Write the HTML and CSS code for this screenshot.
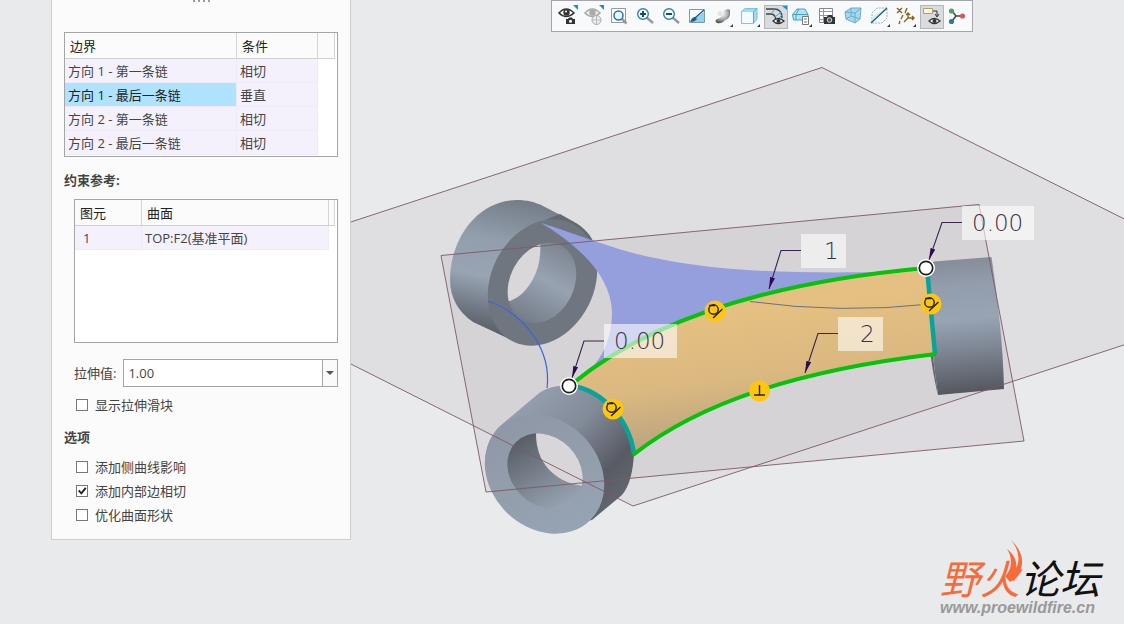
FILE: index.html
```html
<!DOCTYPE html>
<html lang="zh-CN">
<head>
<meta charset="utf-8">
<title>边界混合</title>
<link rel="stylesheet" href="styles.css">
</head>
<body>
<main class="workspace">
  <svg class="scene" viewBox="0 0 1124 624" preserveAspectRatio="xMidYMin slice" role="img" aria-label="三维模型">
    <defs>
      <linearGradient id="skin" gradientUnits="userSpaceOnUse" x1="715" y1="315" x2="735" y2="462"><stop offset="0" stop-color="#e5c082"/><stop offset=".45" stop-color="#dab880"/><stop offset="1" stop-color="#b09c80"/></linearGradient>
      <linearGradient id="tubeA" gradientUnits="userSpaceOnUse" x1="510" y1="200" x2="480" y2="335"><stop offset="0" stop-color="#767e89"/><stop offset=".3" stop-color="#929eac"/><stop offset=".58" stop-color="#98a4b3"/><stop offset=".8" stop-color="#737b87"/><stop offset="1" stop-color="#555a62"/></linearGradient>
      <linearGradient id="boreA" gradientUnits="userSpaceOnUse" x1="570" y1="250" x2="530" y2="325"><stop offset="0" stop-color="#7d8591"/><stop offset=".45" stop-color="#98a3b2"/><stop offset="1" stop-color="#747c88"/></linearGradient>
      <linearGradient id="tubeB" gradientUnits="userSpaceOnUse" x1="530" y1="400" x2="625" y2="490"><stop offset="0" stop-color="#939dac"/><stop offset=".4" stop-color="#838b99"/><stop offset=".8" stop-color="#585b63"/><stop offset="1" stop-color="#62656d"/></linearGradient>
      <linearGradient id="faceB" gradientUnits="userSpaceOnUse" x1="570" y1="420" x2="530" y2="530"><stop offset="0" stop-color="#9098a7"/><stop offset="1" stop-color="#96a3b2"/></linearGradient>
      <linearGradient id="boreB" gradientUnits="userSpaceOnUse" x1="520" y1="442" x2="560" y2="510"><stop offset="0" stop-color="#5b6068"/><stop offset=".4" stop-color="#747c87"/><stop offset="1" stop-color="#98a4b3"/></linearGradient>
      <linearGradient id="tubeC" gradientUnits="userSpaceOnUse" x1="960" y1="258" x2="972" y2="393"><stop offset="0" stop-color="#858c99"/><stop offset=".2" stop-color="#939dac"/><stop offset=".45" stop-color="#98a3b4"/><stop offset=".68" stop-color="#7e8693"/><stop offset="1" stop-color="#54565e"/></linearGradient>
      <clipPath id="holeA"><ellipse cx="542" cy="283" rx="32" ry="42" transform="rotate(27 542 283)"/></clipPath>
      <clipPath id="holeB"><ellipse cx="545" cy="471" rx="34" ry="41" transform="rotate(-45 545 471)"/></clipPath>
      <marker id="arrow" viewBox="0 0 12 6" refX="12" refY="3" markerWidth="12" markerHeight="6" markerUnits="userSpaceOnUse" orient="auto"><path d="M0 0.500L12 3L0 5.500Z" fill="#2b0a50"/></marker>
      <g id="tangent"><circle r="10.5" fill="#fdc70f"/><circle cx="-1.5" cy="-1.5" r="4.7" fill="none" stroke="#222" stroke-width="1.4"/><path d="M-2 7L7.500-2M-6-5.500H0" fill="none" stroke="#222" stroke-width="1.4"/></g>
      <g id="handle"><circle r="9" fill="#fff"/><circle r="6.700" fill="#fff" stroke="#1c1c1c" stroke-width="1.700"/></g>
    </defs>

    <polygon points="822,67 1276,295 633,506 180,278" fill="#dfdfe1"/>
    <polygon points="441,255 979,204 1024,441 486,492" fill="#b8a8b4" fill-opacity=".22"/>

    <path d="M517 200C478 200 450 238 450 280C450 297 458 312 473 322L520 344L580 300L592 240C588 233 582 227 574 222L543 206C535 202 527 200 517 200Z" fill="url(#tubeA)"/>
    <path d="M560 214L574 222C584 227 592 236 595 246L560 222L545 220Z" fill="#646a74"/>
    <ellipse cx="542.500" cy="282.500" rx="51.400" ry="66" transform="rotate(27 542.500 282.500)" fill="#70767f"/>
    <g clip-path="url(#holeA)">
      <path d="M500 230H590V335H500Z" fill="url(#boreA)"/>
      <path d="M500 230H539C542 252 540 266 533 279C527 290 520 297 510 301H500Z" fill="#d9d7da"/>
    </g>

    <path d="M541 223C580 235 620 252 660 259C730 273 800 273 890 272L760 305L584 376C604 358 612 336 612 312C611 274 575 243 541 223Z" fill="#969fdd"/>
    <path d="M926 268L934 261.500L991.500 257C998 300 1003 345 1004 389L938 395C932 353 928 310 926 268Z" fill="url(#tubeC)"/>
    <path d="M926 290L932 350L938 395C932 370 926 330 926 290Z" fill="#62666e"/>
    <path d="M569 386C556 385 546 388 538 394L500 426C490 436 485 448 485 465L560 525L592 520L622 495C630 486 633 470 634 454C629 415 595 386 569 386Z" fill="url(#tubeB)"/>
    <ellipse cx="544.500" cy="474" rx="54" ry="65" transform="rotate(-45 544.500 474)" fill="url(#faceB)"/>
    <g clip-path="url(#holeB)">
      <path d="M500 425H590V515H500Z" fill="url(#boreB)"/>
      <path d="M536 425H590V486.500C555 485 536 463 536 434Z" fill="#d9d6da"/>
    </g>

    <path d="M569 386C650 320 770 282 926 268L935 354C800 370 700 402 634 454C629 415 595 386 569 386Z" fill="url(#skin)"/>
    <path d="M750 301.500Q840 314 931 304" fill="none" stroke="#6b7080"/>
    <path d="M488 301C520 312 552 346 547 388" fill="none" stroke="#3d62e0" stroke-width="1.200"/>
    <g fill="none" stroke="#7d5a62" stroke-width=".9">
      <path d="M180 278L822 67.500L1276 295L633 506Z"/>
      <path d="M441 255.500L979 204.500L1024 441L486 492Z"/>
    </g>
    <g fill="none" stroke-width="4">
      <path d="M569 386C595 386 629 415 634 454M927 268L935 354" stroke="#08a39b" stroke-width="4.500"/>
      <path d="M572 384C650 320 770 282 926 268M633 455C700 402 800 370 936 354" stroke="#06c20c"/>
    </g>

    <g fill="#fff" fill-opacity=".58">
      <rect x="604" y="324" width="73" height="34"/>
      <rect x="801" y="234" width="45" height="34"/>
      <rect x="838" y="317" width="45" height="34"/>
      <rect x="962" y="206" width="72" height="34"/>
    </g>
    <g fill="none" stroke="#3b2450" stroke-width="1.100">
      <path marker-end="url(#arrow)" d="M604 341H584L572 378"/>
      <path marker-end="url(#arrow)" d="M801 250.500H781L769 289"/>
      <path marker-end="url(#arrow)" d="M838 333.500H818L805 373"/>
      <path marker-end="url(#arrow)" d="M962 222.500H942L929 260"/>
    </g>
    <g class="dimension">
      <text x="614" y="349">0.00</text>
      <text x="824" y="259">1</text>
      <text x="860" y="342">2</text>
      <text x="972" y="231">0.00</text>
    </g>
    <use href="#tangent" x="715" y="311"/>
    <use href="#tangent" x="613" y="409"/>
    <use href="#tangent" x="931" y="304"/>
    <circle cx="759.500" cy="391" r="10.500" fill="#fdc70f"/>
    <path d="M754 395H765M759.500 385V395" stroke="#222" stroke-width="1.400"/>
    <use href="#handle" x="569" y="386"/>
    <use href="#handle" x="926" y="268"/>
  </svg>

  <section class="panel" aria-label="约束">
    <div class="gripper"><i></i><i></i><i></i><i></i></div>
    <div class="listbox">
      <table class="list">
        <colgroup><col class="col-boundary"><col class="col-condition"><col></colgroup>
        <thead><tr><th>边界</th><th>条件</th><th></th></tr></thead>
        <tbody>
          <tr><td>方向 1 - 第一条链</td><td>相切</td><td></td></tr>
          <tr><td class="selected">方向 1 - 最后一条链</td><td>垂直</td><td></td></tr>
          <tr><td>方向 2 - 第一条链</td><td>相切</td><td></td></tr>
          <tr><td>方向 2 - 最后一条链</td><td>相切</td><td></td></tr>
        </tbody>
      </table>
    </div>
    <h2 class="heading">约束参考:</h2>
    <div class="listbox references">
      <table class="list">
        <colgroup><col class="col-entity"><col class="col-surface"><col></colgroup>
        <thead><tr><th>图元</th><th>曲面</th><th></th></tr></thead>
        <tbody><tr><td class="index">1</td><td>TOP:F2(基准平面)</td><td></td></tr></tbody>
      </table>
    </div>
    <div class="stretch">
      <label for="stretch">拉伸值:</label>
      <div class="combo"><input id="stretch" type="text" value="1.00"><button type="button" aria-label="展开"></button></div>
    </div>
    <label class="check"><input type="checkbox">显示拉伸滑块</label>
    <h2 class="heading options">选项</h2>
    <label class="check"><input type="checkbox">添加侧曲线影响</label>
    <label class="check"><input type="checkbox" checked>添加内部边相切</label>
    <label class="check"><input type="checkbox">优化曲面形状</label>
  </section>

  <div class="toolbar" role="toolbar" aria-label="视图">
    <button type="button" aria-label="可见性"><svg viewBox="0 0 24 24"><path d="M3 8Q10 0 18 8Q10 15 3 8Z" fill="#fff" stroke="#333" stroke-width="1.600"/><circle cx="10.500" cy="7.500" r="3.200" fill="#333"/><circle cx="10" cy="6.500" r="1" fill="#fff"/><path d="M10 14H12L13 12.500H16L17 14H19V19H10Z" fill="#333"/><circle cx="14.500" cy="16.300" r="1.500" fill="#fff"/><path d="M17 0H22V5Z" fill="#1a8be0"/></svg></button>
    <button type="button" aria-label="隐藏"><svg viewBox="0 0 24 24"><path d="M3 8Q10 0 18 8Q10 15 3 8Z" fill="#eee" stroke="#aaa" stroke-width="1.600"/><circle cx="10.500" cy="7.500" r="3.200" fill="#aaa"/><circle cx="14.500" cy="15" r="4.500" fill="#eee" stroke="#aaa"/><path d="M10 15H19M14.500 11V19" stroke="#bbb"/><path d="M17 0H22V5Z" fill="#1a8be0"/></svg></button>
    <button type="button" aria-label="重新调整"><svg viewBox="0 0 24 24"><path d="M3.500 3.500H17.500V17.500H3.500Z" fill="#fff" stroke="#999"/><path d="M14 14L18.500 18.500" stroke="#999" stroke-width="2.500"/><circle cx="10.500" cy="10.500" r="4.500" fill="#e9f7ff" stroke="#28749f" stroke-width="1.500"/></svg></button>
    <button type="button" aria-label="放大"><svg viewBox="0 0 24 24"><path d="M12 12L19 18" stroke="#999" stroke-width="2.500"/><circle cx="9" cy="9" r="5.300" fill="#fff" stroke="#2d80ac" stroke-width="1.400"/><path d="M6 9H12M9 6V12" stroke="#104e75" stroke-width="2"/></svg></button>
    <button type="button" aria-label="缩小"><svg viewBox="0 0 24 24"><path d="M12 12L19 18" stroke="#999" stroke-width="2.500"/><circle cx="9" cy="9" r="5.300" fill="#fff" stroke="#2d80ac" stroke-width="1.400"/><path d="M6 9H12" stroke="#104e75" stroke-width="2"/></svg></button>
    <button type="button" aria-label="重画"><svg viewBox="0 0 24 24"><path d="M3.500 4.500H18.500V17.500H3.500Z" fill="#f5fcff" stroke="#8298a4"/><path d="M18 7V17H5L10 13Z" fill="#8fd3ec"/><path d="M9 13L18 5" stroke="#215f82" stroke-width="1.500"/><path d="M4 17Q6 12 9 12L11 14Q9 17 4 17Z" fill="#215f82"/></svg></button>
    <button type="button" aria-label="渲染"><svg viewBox="0 0 24 24"><defs><radialGradient id="chrome" cx=".45" cy=".3" r=".7"><stop stop-color="#fff"/><stop offset=".5" stop-color="#bbb"/><stop offset="1" stop-color="#555"/></radialGradient></defs><path d="M11 7Q14 3 18 5V10Q17 14 13 15Q10 19 5 18Q2 16 5 14Q10 13 11 7Z" fill="url(#chrome)"/><circle cx="8" cy="8.500" r="2.500" fill="#e3e3e3"/><path d="M21 22V19L18 22Z" fill="#333"/></svg></button>
    <button type="button" aria-label="显示样式"><svg viewBox="0 0 24 24"><path d="M3.500 6.500L7 3.500H19V14L15.500 18.500H3.500Z" fill="#9fdcf4" stroke="#7cc4e0"/><path d="M4 7H15V18H4Z" fill="#f4fbff"/><path d="M15.500 18V7L19 3.500" fill="none" stroke="#46b0d7"/><path d="M22 22V19L19 22Z" fill="#333"/></svg></button>
    <button type="button" class="pressed" aria-label="曲面显示"><svg viewBox="0 0 24 24"><path d="M2 4H10Q18 4 18 13M2 9H7Q12 9 12 17" fill="none" stroke="#444" stroke-width="1.400"/><path d="M7 9L11 4M11 12L17 7M12 16L18 10" stroke="#38a6cb"/><path d="M9 16Q14 11 20 16Q14 21 9 16Z" fill="#fff" stroke="#333" stroke-width="1.200"/><circle cx="14.500" cy="16" r="2" fill="#333"/><path d="M17 0H23V5Z" fill="#1a8be0"/></svg></button>
    <button type="button" aria-label="已保存方向"><svg viewBox="0 0 24 24"><path d="M2.500 9.500L7 4H15L18 9.500V15H3.500Z" fill="#b5e2f2" stroke="#45a3c6"/><path d="M3 9.500H18M9 4L6 9.500V15" fill="none" stroke="#45a3c6"/><path d="M12.500 11.500H18.500V19.500H12.500Z" fill="#fff" stroke="#777"/><path d="M14 14H17M14 17H17" stroke="#777"/><path d="M22 22V19L19 22Z" fill="#333"/></svg></button>
    <button type="button" aria-label="视图管理器"><svg viewBox="0 0 24 24"><path d="M3.500 3.500H16.500V17.500H3.500Z" fill="#fff" stroke="#888"/><path d="M4 6.500H16M4 10.500H16M4 14.500H16M7.500 4V17" stroke="#999"/><path d="M8 12H11L12 10H16L17 12H19V19H8Z" fill="#333"/><circle cx="13.500" cy="15" r="2.300" fill="#555" stroke="#fff" stroke-width=".8"/></svg></button>
    <button type="button" aria-label="透视图"><svg viewBox="0 0 24 24"><path d="M3 7L9 3H19L18 14L13 18L4 14Z" fill="#a5d8ed" stroke="#6badc8"/><path d="M3 7L13 8L19 3M13 8V18M9 3V11L4 14M9 11L18 14" fill="none" stroke="#6badc8"/></svg></button>
    <button type="button" aria-label="截面"><svg viewBox="0 0 24 24"><path d="M4 8L9 3H19V13L14 18H4Z" fill="#f5fbfe" stroke="#aaa" stroke-dasharray="2 1"/><path d="M4 18V12L17 4H19Z" fill="#d5eef7"/><path d="M3 18L19 3" stroke="#195f87" stroke-width="1.300"/><path d="M22 22V19L19 22Z" fill="#333"/></svg></button>
    <button type="button" aria-label="基准显示"><svg viewBox="0 0 24 24"><path d="M3 3L8 8M8 3L3 8M13 3L11 8M9 10L7 14M6 16L5 19M14 8V13H20M14 13L10 17M12 10L14 8L16 10M18 11L20 13L18 15" fill="none" stroke="#86651d" stroke-width="1.400"/><path d="M22 22V19L19 22Z" fill="#333"/></svg></button>
    <button type="button" class="pressed" aria-label="注释显示"><svg viewBox="0 0 24 24"><path d="M3.500 3.500H12.500V8.500H3.500Z" fill="#fff3d6" stroke="#aaa078"/><path d="M13 6H17V11M15 9L17 12L19 9" fill="none" stroke="#333"/><path d="M9 16Q14 11 20 16Q14 21 9 16Z" fill="#fff" stroke="#333" stroke-width="1.200"/><circle cx="14.500" cy="16" r="2" fill="#333"/></svg></button>
    <button type="button" aria-label="旋转中心"><svg viewBox="0 0 24 24"><path d="M6 6L10 11L16 11M10 11L6 16" fill="none" stroke="#444" stroke-width="1.500"/><circle cx="5.500" cy="6" r="2.600" fill="#53a15a"/><circle cx="16.500" cy="11" r="2.600" fill="#d9575b"/><circle cx="5.500" cy="16.500" r="2.600" fill="#3a7697"/></svg></button>
  </div>

  <div class="brand">
    <div class="brand-name"><span>野火</span>论坛
      <svg class="flame" viewBox="0 0 20 44"><path d="M7 0C20 12 24 29 6 42L1 36C8 30 9 18 3 9C11 15 13 22 12 28C17 20 14 8 7 0Z" fill="#f96a3a"/></svg>
    </div>
    <div class="brand-url">www.proewildfire.cn</div>
  </div>
</main>
</body>
</html>
```
FILE: styles.css
```css
* {
  box-sizing: border-box;
}

body {
  margin: 0;
  background: #e8eaec;
  color: #444;
  font: 13px/20px "Open Sans", "Noto Sans CJK SC", sans-serif;
}

button,
input {
  margin: 0;
  font: inherit;
  color: inherit;
}

.workspace {
  position: relative;
  display: flex;
  justify-content: space-between;
  align-items: flex-start;
  min-height: 100vh;
  padding: 0 151px 0 51px;
  overflow: hidden;
}

.scene {
  position: absolute;
  inset: 0;
  width: 100%;
  height: 100%;
}

.dimension {
  font: 200 23px "DejaVu Sans", sans-serif;
  fill: #3b3048;
}

/* constraint panel */
.panel {
  position: relative;
  width: 300px;
  padding: 0 12px 12px;
  background: #fbfbfb;
  border: 1px solid #cdd0d3;
  border-top: 0;
}

.gripper {
  display: flex;
  justify-content: center;
  gap: 3px;
  height: 32px;
}

.gripper i {
  width: 2px;
  height: 2px;
  background: #999;
}

.listbox {
  padding-right: 2px;
  padding-bottom: 1px;
  background: #fff;
  border: 1px solid #a5a5a5;
}

.references {
  height: 144px;
  margin-left: 10px;
}

.list {
  width: 100%;
  table-layout: fixed;
  border-collapse: separate;
  border-spacing: 0;
}

.col-boundary { width: 172px; }
.col-condition { width: 81px; }
.col-entity { width: 67px; }
.col-surface { width: 187px; }

.list th,
.list td {
  overflow: hidden;
  text-align: left;
  font-weight: 400;
  white-space: nowrap;
}

.list th {
  height: 26px;
  padding: 0 0 0 5px;
  background: #fbfbfb;
  border-right: 1px solid #d4d4d4;
  border-bottom: 1px solid #cfcfcf;
  color: #222;
}

.list td {
  height: 24px;
  padding: 0 0 0 3px;
  background: #f4f1fd;
  border-right: 1px solid #eeebf7;
  border-bottom: 1px solid #eeebf7;
}

.list td:last-child {
  background: #fff;
  border-color: #fff;
}

.list td.selected {
  background: #afe3fd;
  color: #222;
}

.list td.index {
  padding-left: 8px;
}

.heading {
  margin: 13px 0 9px;
  font-size: 13px;
  line-height: 20px;
  font-weight: 700;
}

.heading.options {
  margin: 10px 0 8px;
}

.stretch {
  display: flex;
  align-items: center;
  gap: 7px;
  margin: 16px 0 6px 10px;
}

.stretch label {
  white-space: nowrap;
}

.combo {
  display: flex;
  flex: 1;
  height: 28px;
  background: #fff;
  border: 1px solid #a5a5a5;
}

.combo input {
  flex: 1;
  min-width: 0;
  padding: 0 4px;
  border: 0;
  background: none;
}

.combo button {
  display: grid;
  place-items: center;
  width: 15px;
  padding: 0;
  background: #fafafa;
  border: 0;
  border-left: 1px solid #a5a5a5;
}

.combo button::after {
  content: "";
  border: 4px solid transparent;
  border-top-color: #555;
  border-bottom: 0;
}

.check {
  display: flex;
  align-items: center;
  gap: 7px;
  height: 24px;
  padding-left: 12px;
}

.check input {
  width: 12px;
  height: 12px;
  appearance: none;
  background: #fff;
  border: 1px solid #777;
}

.check input:checked::after {
  content: "";
  display: block;
  width: 10px;
  height: 10px;
  background: #222;
  clip-path: polygon(10% 50%, 25% 38%, 42% 60%, 80% 12%, 95% 24%, 44% 88%);
}

/* view toolbar */
.toolbar {
  position: relative;
  display: flex;
  gap: 2px;
  padding: 4px 2px 2px 4px;
  background: #f8f9fb;
  border: 1px solid #a3a5a9;
}

.toolbar button {
  width: 24px;
  height: 24px;
  padding: 0;
  background: none;
  border: 0;
}

.toolbar button.pressed {
  background: #d9dbdf;
  outline: 1px solid #b3b5b9;
  outline-offset: -1px;
}

.toolbar svg {
  display: block;
  fill: none;
}

/* forum mark */
.brand {
  position: absolute;
  right: 16px;
  bottom: 8px;
  width: 168px;
}

.brand-name {
  position: relative;
  color: #111;
  font: italic 400 40px/46px "Noto Sans CJK SC", sans-serif;
  white-space: nowrap;
}

.brand-name span {
  color: #f96a3a;
}

.flame {
  position: absolute;
  left: 64px;
  top: -14px;
  width: 20px;
  height: 44px;
}

.brand-url {
  color: #999;
  font: italic 700 16px/16px "Liberation Sans", sans-serif;
}
```
